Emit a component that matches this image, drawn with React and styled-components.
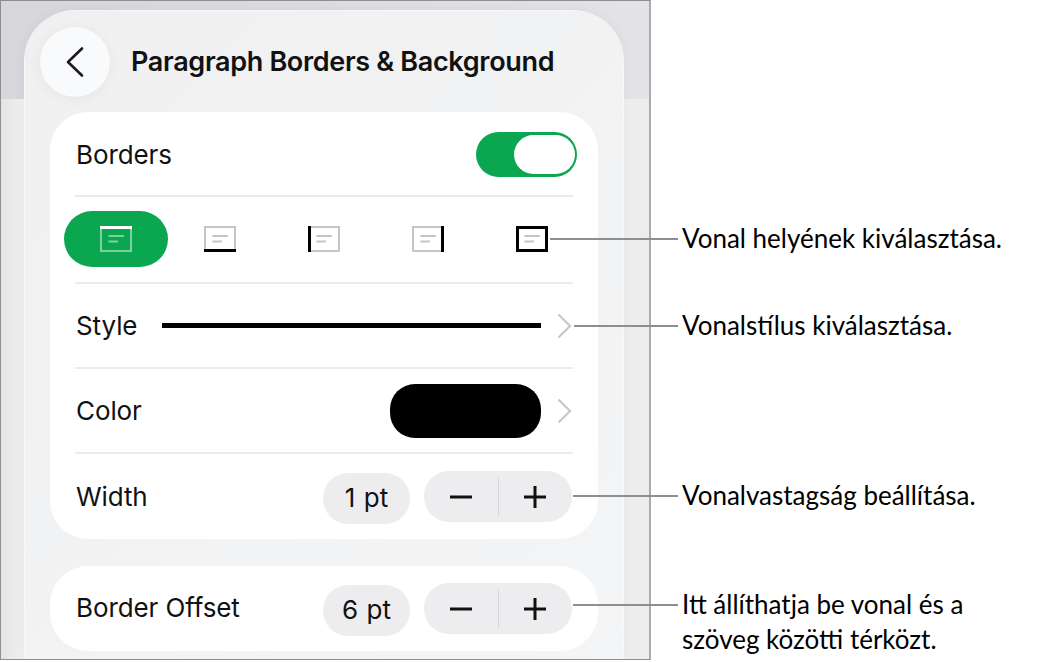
import React from 'react'
import styled, { createGlobalStyle } from 'styled-components'

const GlobalStyle = createGlobalStyle`
  html, body {
    margin: 0;
    padding: 0;
    background: #fff;
  }
`

const Page = styled.div`
  display: flex;
  width: 1060px;
  height: 662px;
  overflow: hidden;
  font-family: Inter, "Liberation Sans", sans-serif;
  color: #111;
`

const Frame = styled.div`
  position: relative;
  box-sizing: border-box;
  width: 651px;
  height: 660px;
  flex: none;
  display: flex;
  padding: 10px 26px 0 24px;
  border-style: solid;
  border-color: #8f8f8f #ababab #8f8f8f #8f8f8f;
  border-width: 1px 2px 1px 1px;
  background:
    linear-gradient(to right, #e4e4e4 0, #f1f1f1 24px, #f1f1f1 600px, #ececec 100%) 0 98px / 100% 100% no-repeat,
    linear-gradient(100deg, #d7d7db 0%, #e6e6ea 100%);
  overflow: hidden;
`

const Panel = styled.div`
  flex: 1;
  display: flex;
  flex-direction: column;
  padding: 0 25px;
  border-radius: 50px 50px 0 0;
  background: linear-gradient(135deg, #f0f0f1 0%, #f4f5f6 100%);
  box-shadow: 0 0 0 1px #f8f8f9, 0 0 14px rgba(0, 0, 0, 0.05);
`

const Header = styled.div`
  height: 101px;
  flex: none;
  display: flex;
  align-items: center;
  gap: 21px;
  margin-left: -10px;
`

const BackButton = styled.div`
  width: 70px;
  height: 70px;
  border-radius: 50%;
  display: flex;
  align-items: center;
  justify-content: center;
  background: #f9fafb;
  box-shadow: 0 2px 14px rgba(0, 0, 0, 0.05);
`

const Title = styled.div`
  font-size: 27px;
  font-weight: 600;
  letter-spacing: -0.33px;
`

const Card = styled.div`
  display: flex;
  flex-direction: column;
  padding: 0 25px;
  border-radius: 38px;
  background: #fff;
  margin-bottom: ${p => p.$gap || 0}px;
`

const Row = styled.div`
  height: ${p => p.$height}px;
  box-sizing: border-box;
  display: flex;
  align-items: center;
  padding-top: ${p => p.$nudge || 0}px;
  border-bottom: ${p => (p.$last ? 'none' : '2px solid #ebebeb')};
`

const Label = styled.div`
  font-size: 26px;
  letter-spacing: -0.1px;
  margin: 0 auto ${p => p.$lift || 0}px 1px;
`

const Toggle = styled.div`
  width: 101px;
  height: 45px;
  box-sizing: border-box;
  display: flex;
  justify-content: flex-end;
  padding: 3px 2px;
  margin-right: -4px;
  border-radius: 23px;
  background: #0ba750;
`

const Knob = styled.div`
  width: 61px;
  height: 39px;
  border-radius: 20px;
  background: #fff;
`

const BorderPicker = styled.div`
  display: grid;
  grid-template-columns: repeat(5, 104px);
  margin: -1px -11px 0;
  align-items: center;
`

const BorderOption = styled.div`
  height: 56px;
  display: flex;
  align-items: center;
  justify-content: center;
  border-radius: 28px;
  background: ${p => (p.$active ? '#0ba750' : 'transparent')};
`

const StyleLine = styled.div`
  width: 379px;
  height: 5px;
  background: #000;
`

const Swatch = styled.div`
  width: 151px;
  height: 54px;
  border-radius: 25px;
  background: #000;
`

const ChevronWrap = styled.div`
  width: 32px;
  box-sizing: border-box;
  padding-right: 1px;
  display: flex;
  justify-content: flex-end;
`

const Value = styled.div`
  width: 87px;
  height: 51px;
  margin: 3px 14px 0 0;
  box-sizing: border-box;
  padding-bottom: 2px;
  display: flex;
  align-items: center;
  justify-content: center;
  border-radius: 25px;
  background: #ededef;
  font-size: 26px;
  word-spacing: 1px;
`

const Stepper = styled.div`
  width: 148px;
  height: 51px;
  margin-right: 1px;
  display: flex;
  align-items: center;
  border-radius: 25px;
  background: #ededef;
`

const StepButton = styled.div`
  flex: 1;
  display: flex;
  align-items: center;
  justify-content: center;
`

const StepDivider = styled.div`
  width: 1px;
  height: 38px;
  background: #d6d6d8;
`

const Callouts = styled.div`
  display: flex;
  flex-direction: column;
  padding: 221px 0 0 31px;
  font-family: Lato, "Open Sans", sans-serif;
  font-size: 26px;
  line-height: 35px;
  color: #000;
`

const Callout = styled.div`
  position: relative;
  margin-top: ${p => p.$top}px;
  white-space: pre-line;
`

const Leader = styled.div`
  position: absolute;
  top: 17px;
  right: calc(100% + 4px);
  width: ${p => p.$width}px;
  height: 2px;
  background: #8e8e8e;
`

const BackIcon = () => (
  <svg width="20" height="32" viewBox="0 0 20 32" fill="none">
    <path d="M17 2.500 L3 16 L17 29.500" stroke="#1c1c1e" strokeWidth="2.600" strokeLinecap="round" strokeLinejoin="round" />
  </svg>
)

const Chevron = () => (
  <svg width="15" height="26" viewBox="0 0 15 26" fill="none">
    <path d="M1.500 1.500 L13 13 L1.500 24.500" stroke="#c8c8ca" strokeWidth="2.200" />
  </svg>
)

const Minus = () => (
  <svg width="22" height="22" viewBox="0 0 22 22">
    <rect x="0" y="9.500" width="22" height="3" fill="#111" />
  </svg>
)

const Plus = () => (
  <svg width="22" height="22" viewBox="0 0 22 22">
    <rect x="0" y="9.500" width="22" height="3" fill="#111" />
    <rect x="9.500" y="0" width="3" height="22" fill="#111" />
  </svg>
)

// one frame icon, thick sides are given as a list
const BorderIcon = ({ sides, active }) => {
  const thin = active ? '#7fd0a1' : '#c6c6c6'
  const thick = active ? '#fff' : '#000'
  const text = active ? '#7fd0a1' : '#c6c6c6'
  const edge = {
    top: 'M0 1.500H32',
    bottom: 'M0 24.500H32',
    left: 'M1.500 0V26',
    right: 'M30.500 0V26',
  }
  return (
    <svg width="32" height="26" viewBox="0 0 32 26" fill="none">
      <rect x="1" y="1" width="30" height="24" stroke={thin} strokeWidth="2" />
      <path d="M8.500 10H24M8.500 15.500H18" stroke={text} strokeWidth="2" />
      {sides.map(s => (
        <path key={s} d={edge[s]} stroke={thick} strokeWidth="3" />
      ))}
    </svg>
  )
}

const borderOptions = [
  { sides: ['top'], active: true },
  { sides: ['bottom'] },
  { sides: ['left'] },
  { sides: ['right'] },
  { sides: ['top', 'bottom', 'left', 'right'] },
]

const StepperControl = () => (
  <Stepper>
    <StepButton><Minus /></StepButton>
    <StepDivider />
    <StepButton><Plus /></StepButton>
  </Stepper>
)

const App = () => {
  return (
    <Page>
      <GlobalStyle />
      <Frame>
        <Panel>
          <Header>
            <BackButton><BackIcon /></BackButton>
            <Title>Paragraph Borders &amp; Background</Title>
          </Header>
          <Card $gap={27}>
            <Row $height={85} $nudge={2}>
              <Label>Borders</Label>
              <Toggle><Knob /></Toggle>
            </Row>
            <Row $height={87}>
              <BorderPicker>
                {borderOptions.map((o, i) => (
                  <BorderOption key={i} $active={o.active}>
                    <BorderIcon sides={o.sides} active={o.active} />
                  </BorderOption>
                ))}
              </BorderPicker>
            </Row>
            <Row $height={85}>
              <Label>Style</Label>
              <StyleLine />
              <ChevronWrap><Chevron /></ChevronWrap>
            </Row>
            <Row $height={85}>
              <Label>Color</Label>
              <Swatch />
              <ChevronWrap><Chevron /></ChevronWrap>
            </Row>
            <Row $height={85} $last>
              <Label>Width</Label>
              <Value>1 pt</Value>
              <StepperControl />
            </Row>
          </Card>
          <Card>
            <Row $height={85} $last>
              <Label $lift={3}>Border Offset</Label>
              <Value>6 pt</Value>
              <StepperControl />
            </Row>
          </Card>
        </Panel>
      </Frame>
      <Callouts>
        <Callout $top={0}><Leader $width={128} />Vonal helyének kiválasztása.</Callout>
        <Callout $top={52}><Leader $width={104} />Vonalstílus kiválasztása.</Callout>
        <Callout $top={135}><Leader $width={105} />Vonalvastagság beállítása.</Callout>
        <Callout $top={74}><Leader $width={105} />{'Itt állíthatja be vonal és a\nszöveg közötti térközt.'}</Callout>
      </Callouts>
    </Page>
  )
}

export default App
